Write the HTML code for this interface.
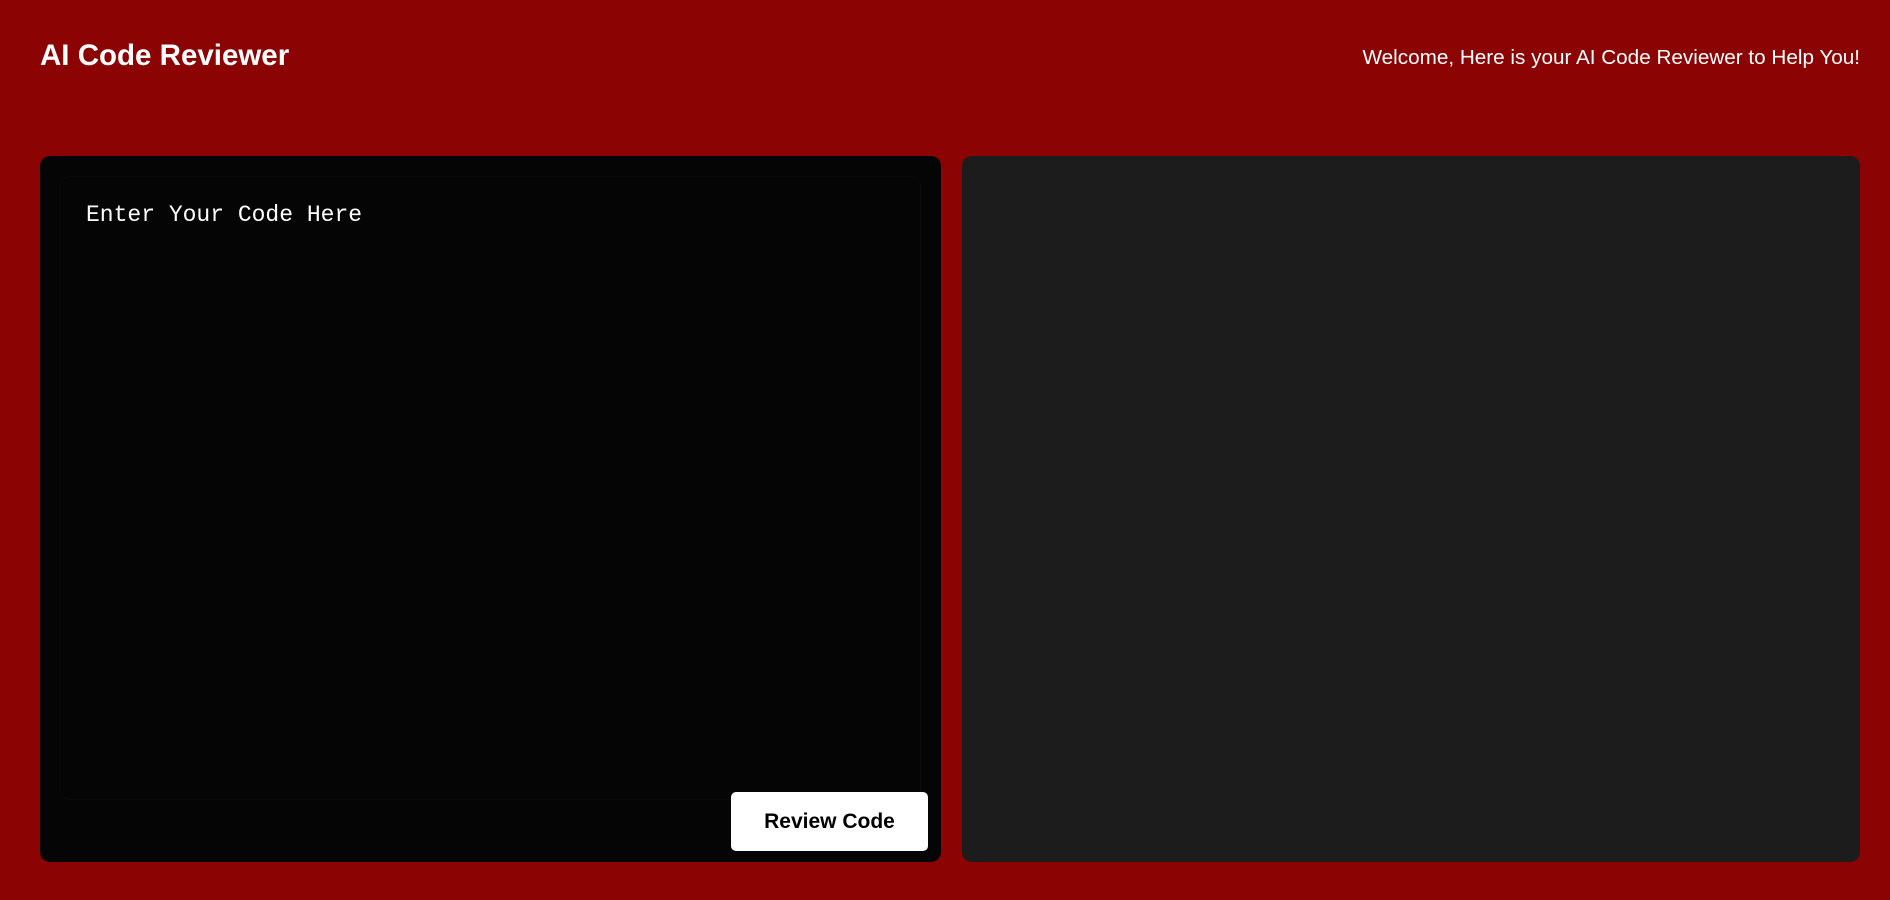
<!DOCTYPE html>
<html><head><meta charset="utf-8"><style>
*{margin:0;padding:0;box-sizing:border-box}
html,body{width:1890px;height:900px;overflow:hidden;background:#8b0303;font-family:"Liberation Sans",sans-serif}
.title{position:absolute;left:40px;top:39px;font-size:29.5px;font-weight:bold;color:#fff}
.welcome{position:absolute;right:30px;top:46px;font-size:20.7px;color:#fff}
.left{position:absolute;left:40px;top:156px;width:901px;height:706px;background:#050505;border-radius:10px}
.inner{position:absolute;left:20px;top:20px;width:861px;height:624px;border-radius:10px;border:1px solid #0a0a0a}
.code{position:absolute;left:46px;top:46px;font-family:"Liberation Mono",monospace;font-size:23px;color:#fff}
.btn{position:absolute;left:691px;top:636px;width:197px;height:59px;background:#fff;border-radius:5px;font-size:21px;font-weight:bold;color:#000;display:flex;align-items:center;justify-content:center}
.right{position:absolute;left:962px;top:156px;width:898px;height:706px;background:#1c1c1c;border-radius:10px}
</style></head><body>
<div class="title">AI Code Reviewer</div>
<div class="welcome">Welcome, Here is your AI Code Reviewer to Help You!</div>
<div class="left"><div class="inner"></div><div class="code">Enter Your Code Here</div><div class="btn">Review Code</div></div>
<div class="right"></div>
</body></html>
